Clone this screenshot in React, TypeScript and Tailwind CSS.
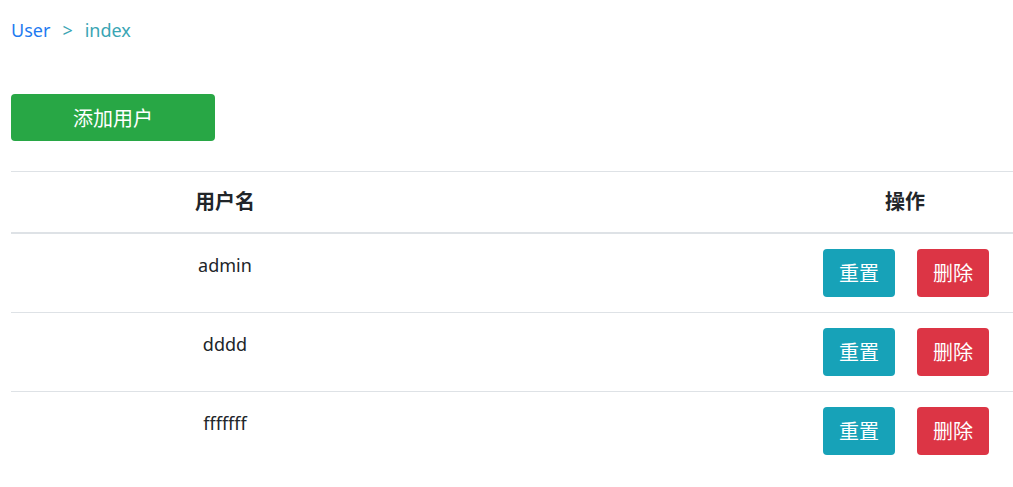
const users = ["admin", "dddd", "fffffff"];

export default function App() {
  return (
    <div className="min-h-screen bg-white pl-[11px] text-[18px] text-[#212529] font-['Noto_Sans','Noto_Sans_CJK_SC',sans-serif]">
      <nav className="flex items-center h-[60px] pt-[1px] gap-[12px]">
        <span className="text-[#1e7bf0]">User</span>
        <span className="text-[#3aa5b4]">&gt;</span>
        <span className="text-[#3aa5b4]">index</span>
      </nav>

      <div className="pt-[34px] pb-[30px]">
        <button className="w-[204px] h-[47px] pt-[3px] rounded-[4px] bg-[#28a745] text-white text-[20px]">
          添加用户
        </button>
      </div>

      <div className="w-[1002px]">
        <div className="grid grid-cols-[428px_358px_216px] h-[63px] items-center border-t border-[#dee2e6] border-b-2 font-bold text-[20px]">
          <div className="text-center">用户名</div>
          <div />
          <div className="text-center">操作</div>
        </div>
        {users.map((name) => (
          <div
            key={name}
            className="grid grid-cols-[428px_358px_216px] h-[79px] border-b border-[#dee2e6] last:border-b-0"
          >
            <div className="text-center pt-[18px] leading-[27px]">{name}</div>
            <div />
            <div className="flex gap-[22px] pl-[26px] pt-[15px] text-[20px]">
              <button className="w-[72px] h-[48px] pt-[2px] rounded-[4px] bg-[#17a2b8] text-white">
                重置
              </button>
              <button className="w-[72px] h-[48px] pt-[2px] rounded-[4px] bg-[#dc3545] text-white">
                删除
              </button>
            </div>
          </div>
        ))}
      </div>
    </div>
  );
}
